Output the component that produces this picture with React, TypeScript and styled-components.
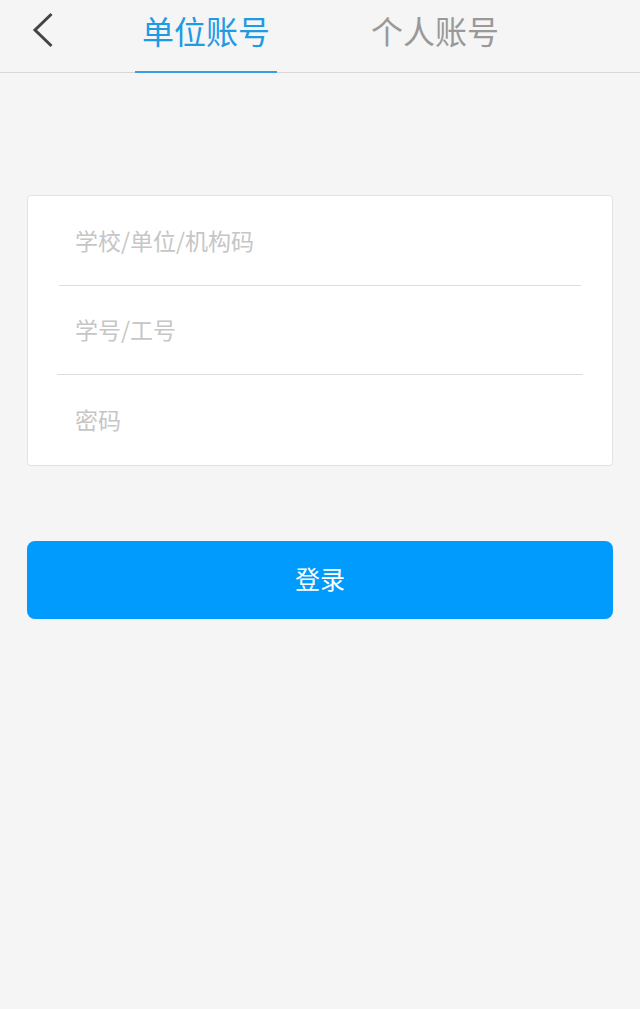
import React from 'react';
import styled, { createGlobalStyle } from 'styled-components';

const GlobalStyle = createGlobalStyle`
  html, body {
    margin: 0;
    padding: 0;
    background: #f5f5f5;
    font-family: "Noto Sans CJK SC", "Noto Sans", sans-serif;
  }
`;

const Page = styled.div`
  min-height: 1009px;
  background: #f5f5f5;
`;

const Header = styled.div`
  height: 72px;
  border-bottom: 1px solid #d8d8d8;
  display: flex;
  align-items: stretch;
`;

const BackButton = styled.div`
  width: 110px;
  display: flex;
  align-items: center;
  padding-left: 31px;
  box-sizing: border-box;
  padding-bottom: 12px;
`;

const Tabs = styled.div`
  display: flex;
  align-items: stretch;
  margin-left: 25px;
  gap: 87px;
`;

const Tab = styled.div<{ active?: boolean }>`
  width: 142px;
  display: flex;
  align-items: center;
  justify-content: center;
  font-size: 32px;
  line-height: 1;
  padding-bottom: 11px;
  box-sizing: border-box;
  color: ${p => (p.active ? '#1f9ae3' : '#999999')};
  border-bottom: 2px solid ${p => (p.active ? '#3a9fe0' : 'transparent')};
  margin-bottom: -1px;
`;

const Card = styled.div`
  margin: 122px 27px 0;
  background: #fff;
  border: 1px solid #e2e2e2;
  border-radius: 4px;
`;

const Field = styled.div<{ inset?: number; last?: boolean; h?: number }>`
  height: ${p => p.h ?? 90}px;
  display: flex;
  align-items: center;
  padding-left: 47px;
  padding-bottom: 3px;
  box-sizing: border-box;
  font-size: 23px;
  color: #c6c6c6;
  position: relative;
  &::after {
    content: '';
    display: ${p => (p.last ? 'none' : 'block')};
    position: absolute;
    left: ${p => p.inset ?? 31}px;
    right: ${p => p.inset ?? 31}px;
    bottom: 0;
    height: 1px;
    background: #dedede;
  }
`;

const LoginButton = styled.button`
  display: block;
  margin: 75px 27px 0;
  width: calc(100% - 54px);
  height: 78px;
  border: none;
  border-radius: 8px;
  background: #009bfc;
  color: #fff;
  font-family: "Noto Sans CJK SC", "Noto Sans", sans-serif;
  font-size: 25px;
  padding: 0 0 5px;
`;

export default function App() {
  return (
    <Page>
      <GlobalStyle />
      <Header>
        <BackButton>
          <svg width="24" height="36" viewBox="0 0 24 36">
            <path d="M20.5 2 L4 18 L20.5 34" fill="none" stroke="#444" strokeWidth="3" />
          </svg>
        </BackButton>
        <Tabs>
          <Tab active>单位账号</Tab>
          <Tab>个人账号</Tab>
        </Tabs>
      </Header>
      <Card>
        <Field inset={31} h={90}>学校/单位/机构码</Field>
        <Field inset={29} h={89}>学号/工号</Field>
        <Field last h={90}>密码</Field>
      </Card>
      <LoginButton>登录</LoginButton>
    </Page>
  );
}
